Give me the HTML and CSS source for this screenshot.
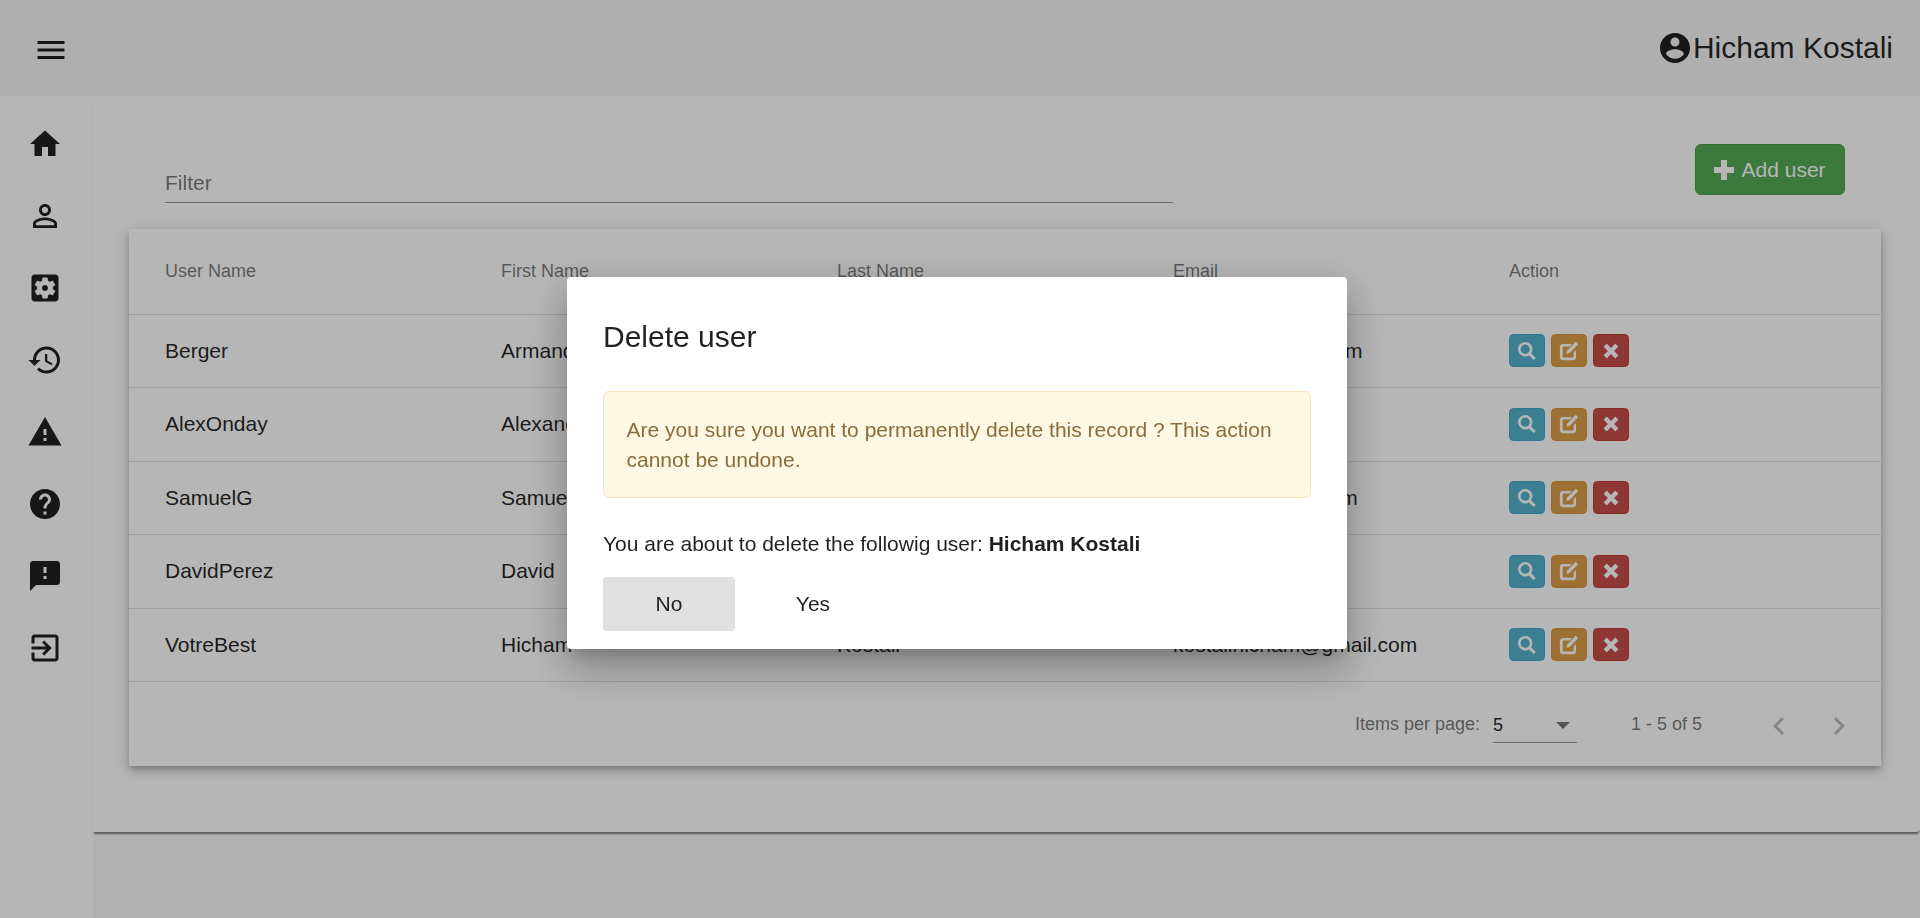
FILE: index.html
```html
<!DOCTYPE html>
<html lang="en">
<head>
  <meta charset="UTF-8" />
  <title>Users</title>
  <link rel="stylesheet" href="styles.css">
</head>
<body>

<svg class="icon-defs">
  <symbol id="i-menu" viewBox="0 0 24 24"><path d="M3 18h18v-2H3v2zm0-5h18v-2H3v2zm0-7v2h18V6H3z"/></symbol>
  <symbol id="i-account" viewBox="0 0 24 24"><path d="M12 2C6.48 2 2 6.48 2 12s4.48 10 10 10 10-4.48 10-10S17.52 2 12 2zm0 3c1.66 0 3 1.34 3 3s-1.34 3-3 3-3-1.34-3-3 1.34-3 3-3zm0 14.2c-2.5 0-4.71-1.28-6-3.22.03-1.99 4-3.08 6-3.08 1.99 0 5.97 1.09 6 3.08-1.29 1.94-3.5 3.22-6 3.22z"/></symbol>
  <symbol id="i-home" viewBox="0 0 24 24"><path d="M10 20v-6h4v6h5v-8h3L12 3 2 12h3v8z"/></symbol>
  <symbol id="i-person" viewBox="0 0 24 24"><path d="M12 5.9c1.16 0 2.1.94 2.1 2.1s-.94 2.1-2.1 2.1S9.9 9.16 9.9 8s.94-2.1 2.1-2.1m0 9c2.97 0 6.1 1.46 6.1 2.1v1.1H5.9V17c0-.64 3.13-2.1 6.1-2.1M12 4C9.79 4 8 5.79 8 8s1.79 4 4 4 4-1.79 4-4-1.79-4-4-4zm0 9c-2.67 0-8 1.34-8 4v3h16v-3c0-2.66-5.33-4-8-4z"/></symbol>
  <symbol id="i-settings" viewBox="0 0 24 24"><path d="M12 10c-1.1 0-2 .9-2 2s.9 2 2 2 2-.9 2-2-.9-2-2-2zm7-7H5c-1.11 0-2 .9-2 2v14c0 1.1.89 2 2 2h14c1.11 0 2-.9 2-2V5c0-1.1-.89-2-2-2zm-1.75 9c0 .23-.02.46-.05.68l1.48 1.16c.13.11.17.3.08.45l-1.4 2.42c-.09.15-.27.21-.43.15l-1.74-.7c-.36.28-.76.51-1.18.69l-.26 1.85c-.03.17-.18.3-.35.3h-2.8c-.17 0-.32-.13-.35-.29l-.26-1.85c-.43-.18-.82-.41-1.18-.69l-1.74.7c-.16.06-.34 0-.43-.15l-1.4-2.42c-.09-.15-.05-.34.08-.45l1.48-1.16c-.03-.23-.05-.46-.05-.69 0-.23.02-.46.05-.68l-1.48-1.16c-.13-.11-.17-.3-.08-.45l1.4-2.42c.09-.15.27-.21.43-.15l1.74.7c.36-.28.76-.51 1.18-.69l.26-1.85c.03-.17.18-.3.35-.3h2.8c.17 0 .32.13.35.29l.26 1.85c.43.18.82.41 1.18.69l1.74-.7c.16-.06.34 0 .43.15l1.4 2.42c.09.15.05.34-.08.45l-1.48 1.16c.03.23.05.46.05.69z"/></symbol>
  <symbol id="i-history" viewBox="0 0 24 24"><path d="M13 3c-4.97 0-9 4.03-9 9H1l3.89 3.89.07.14L9 12H6c0-3.87 3.13-7 7-7s7 3.13 7 7-3.13 7-7 7c-1.93 0-3.68-.79-4.94-2.06l-1.42 1.42C8.27 19.99 10.51 21 13 21c4.97 0 9-4.03 9-9s-4.03-9-9-9zm-1 5v5l4.28 2.54.72-1.21-3.5-2.08V8H12z"/></symbol>
  <symbol id="i-warning" viewBox="0 0 24 24"><path d="M1 21h22L12 2 1 21zm12-3h-2v-2h2v2zm0-4h-2v-4h2v4z"/></symbol>
  <symbol id="i-help" viewBox="0 0 24 24"><path d="M12 2C6.48 2 2 6.48 2 12s4.48 10 10 10 10-4.48 10-10S17.52 2 12 2zm1 17h-2v-2h2v2zm2.07-7.75l-.9.92C13.45 12.9 13 13.5 13 15h-2v-.5c0-1.1.45-2.1 1.17-2.83l1.24-1.26c.37-.36.59-.86.59-1.41 0-1.1-.9-2-2-2s-2 .9-2 2H8c0-2.21 1.79-4 4-4s4 1.79 4 4c0 .88-.36 1.68-.93 2.25z"/></symbol>
  <symbol id="i-feedback" viewBox="0 0 24 24"><path d="M20 2H4c-1.1 0-1.99.9-1.99 2L2 22l4-4h14c1.1 0 2-.9 2-2V4c0-1.1-.9-2-2-2zm-7 12h-2v-2h2v2zm0-4h-2V6h2v4z"/></symbol>
  <symbol id="i-exit" viewBox="0 0 24 24"><path d="M10.09 15.59L11.5 17l5-5-5-5-1.41 1.41L12.67 11H3v2h9.67l-2.58 2.59zM19 3H5c-1.11 0-2 .9-2 2v4h2V5h14v14H5v-4H3v4c0 1.1.89 2 2 2h14c1.1 0 2-.9 2-2V5c0-1.1-.9-2-2-2z"/></symbol>
  <symbol id="i-prev" viewBox="0 0 24 24"><path d="M15.41 7.41L14 6l-6 6 6 6 1.41-1.41L10.83 12z"/></symbol>
  <symbol id="i-next" viewBox="0 0 24 24"><path d="M10 6L8.59 7.41 13.17 12l-4.58 4.58L10 18l6-6z"/></symbol>
  <symbol id="g-plus" viewBox="0 0 20 20"><path d="M7 0h6v7h7v6h-7v7H7v-7H0V7h7z"/></symbol>
  <symbol id="g-search" viewBox="0 0 20 20"><path fill-rule="evenodd" d="M8.2 1a7.2 7.2 0 0 1 5.9 11.3l4.7 4.7-2.2 2.1-4.7-4.7A7.2 7.2 0 1 1 8.2 1zm0 2.6a4.6 4.6 0 1 0 0 9.2 4.6 4.6 0 0 0 0-9.2z"/></symbol>
  <symbol id="g-edit" viewBox="0 0 20 20"><path d="M4 3h9l-2.4 2.4H4.6a1 1 0 0 0-1 1v9a1 1 0 0 0 1 1h9a1 1 0 0 0 1-1v-4l2.4-2.4V16a3.2 3.2 0 0 1-3.2 3.2H4A3.2 3.2 0 0 1 .9 16V6.2A3.2 3.2 0 0 1 4 3z"/><path d="M16.8.8l2.4 2.4-8.6 8.7-3.2.8.8-3.2z"/></symbol>
  <symbol id="g-remove" viewBox="0 0 20 20"><path d="M5.2 1.8L10 6.6l4.8-4.8 3.4 3.4L13.4 10l4.8 4.8-3.4 3.4-4.8-4.8-4.8 4.8-3.4-3.4L6.6 10 1.8 5.2z"/></symbol>
</svg>

<header class="topbar">
  <svg class="icon menu-icon"><use href="#i-menu"/></svg>
  <div class="account">
    <svg class="icon"><use href="#i-account"/></svg>
    <span>Hicham Kostali</span>
  </div>
</header>

<div class="layout">
  <nav class="sidebar">
    <svg class="icon"><use href="#i-home"/></svg>
    <svg class="icon"><use href="#i-person"/></svg>
    <svg class="icon"><use href="#i-settings"/></svg>
    <svg class="icon"><use href="#i-history"/></svg>
    <svg class="icon"><use href="#i-warning"/></svg>
    <svg class="icon"><use href="#i-help"/></svg>
    <svg class="icon"><use href="#i-feedback"/></svg>
    <svg class="icon"><use href="#i-exit"/></svg>
  </nav>

  <div class="content">
    <main class="panel">
      <div class="tools">
        <div class="filter">Filter</div>
        <button class="add-btn"><svg class="glyph"><use href="#g-plus"/></svg>Add user</button>
      </div>

      <div class="card">
        <div class="row head-row">
          <div class="cell">User Name</div>
          <div class="cell">First Name</div>
          <div class="cell">Last Name</div>
          <div class="cell">Email</div>
          <div class="cell">Action</div>
        </div>
        <div class="row">
          <div class="cell">Berger</div>
          <div class="cell">Armand</div>
          <div class="cell">Berger</div>
          <div class="cell">aberger@gmail.com</div>
          <div class="cell actions">
            <button class="act act-info"><svg class="glyph"><use href="#g-search"/></svg></button>
            <button class="act act-warn"><svg class="glyph"><use href="#g-edit"/></svg></button>
            <button class="act act-danger"><svg class="glyph"><use href="#g-remove"/></svg></button>
          </div>
        </div>
        <div class="row">
          <div class="cell">AlexOnday</div>
          <div class="cell">Alexandre</div>
          <div class="cell">Onday</div>
          <div class="cell">alex@onday.com</div>
          <div class="cell actions">
            <button class="act act-info"><svg class="glyph"><use href="#g-search"/></svg></button>
            <button class="act act-warn"><svg class="glyph"><use href="#g-edit"/></svg></button>
            <button class="act act-danger"><svg class="glyph"><use href="#g-remove"/></svg></button>
          </div>
        </div>
        <div class="row">
          <div class="cell">SamuelG</div>
          <div class="cell">Samuel</div>
          <div class="cell">Gauthier</div>
          <div class="cell">samuel@gmail.com</div>
          <div class="cell actions">
            <button class="act act-info"><svg class="glyph"><use href="#g-search"/></svg></button>
            <button class="act act-warn"><svg class="glyph"><use href="#g-edit"/></svg></button>
            <button class="act act-danger"><svg class="glyph"><use href="#g-remove"/></svg></button>
          </div>
        </div>
        <div class="row">
          <div class="cell">DavidPerez</div>
          <div class="cell">David</div>
          <div class="cell">Perez</div>
          <div class="cell">david@perez.com</div>
          <div class="cell actions">
            <button class="act act-info"><svg class="glyph"><use href="#g-search"/></svg></button>
            <button class="act act-warn"><svg class="glyph"><use href="#g-edit"/></svg></button>
            <button class="act act-danger"><svg class="glyph"><use href="#g-remove"/></svg></button>
          </div>
        </div>
        <div class="row">
          <div class="cell">VotreBest</div>
          <div class="cell">Hicham</div>
          <div class="cell">Kostali</div>
          <div class="cell">kostalihicham@gmail.com</div>
          <div class="cell actions">
            <button class="act act-info"><svg class="glyph"><use href="#g-search"/></svg></button>
            <button class="act act-warn"><svg class="glyph"><use href="#g-edit"/></svg></button>
            <button class="act act-danger"><svg class="glyph"><use href="#g-remove"/></svg></button>
          </div>
        </div>

        <div class="paginator">
          <span>Items per page:</span>
          <div class="page-select">
            <span class="page-value">5</span>
            <span class="page-arrow"></span>
          </div>
          <span class="page-range">1 - 5 of 5</span>
          <svg class="icon page-btn"><use href="#i-prev"/></svg>
          <svg class="icon page-btn"><use href="#i-next"/></svg>
        </div>
      </div>
    </main>
  </div>
</div>

<!-- Modal -->
<div class="backdrop">
  <div class="modal">
    <h2 class="modal-title">Delete user</h2>
    <div class="alert">Are you sure you want to permanently delete this record ? This action cannot be undone.</div>
    <p class="modal-text">You are about to delete the followig user: <strong>Hicham Kostali</strong></p>
    <div class="modal-actions">
      <button class="modal-btn modal-btn-no">No</button>
      <button class="modal-btn">Yes</button>
    </div>
  </div>
</div>

</body>
</html>
```

FILE: styles.css
```css
html, body {
  height: 100%;
}

body {
  margin: 0;
  overflow: hidden;
  font-family: "Liberation Sans", Arial, sans-serif;
  font-size: 21px;
  line-height: 30px;
  background: #f9f9f9;
  color: rgba(0,0,0,0.87);
}

button {
  font-family: inherit;
}

.icon-defs {
  display: none;
}

.icon {
  width: 36px;
  height: 36px;
  fill: currentColor;
  flex: none;
}

.glyph {
  width: 20px;
  height: 20px;
  fill: currentColor;
  flex: none;
}

/* Top bar */
.topbar {
  height: 96px;
  box-sizing: border-box;
  background: #f5f5f5;
  display: flex;
  align-items: center;
  justify-content: space-between;
  padding: 0 27px 0 33px;
}

.menu-icon {
  margin-top: 4px;
}

.account {
  display: flex;
  align-items: center;
  font-size: 30px;
}

/* Sidebar */
.layout {
  display: flex;
  height: calc(100% - 96px);
}

.sidebar {
  width: 93px;
  box-sizing: border-box;
  padding: 30px 3px 0 0;
  background: #fff;
  display: flex;
  flex-direction: column;
  align-items: center;
  gap: 36px;
}

.content {
  flex: 1;
  min-width: 0;
}

.panel {
  height: 736px;
  box-sizing: border-box;
  background: #fff;
  border-bottom-right-radius: 4px;
  padding: 0 39px 0 36px;
  box-shadow: 0 3px 2px -1px rgba(0,0,0,0.5);
}

/* Filter row */
.tools {
  height: 133px;
  box-sizing: border-box;
  padding: 48px 36px 0 36px;
  display: flex;
  justify-content: space-between;
  align-items: flex-start;
}

.filter {
  width: 1008px;
  box-sizing: border-box;
  margin-top: 24px;
  height: 34.5px;
  border-bottom: 1.5px solid rgba(0,0,0,0.42);
  color: rgba(0,0,0,0.54);
}

.add-btn {
  height: 51px;
  width: 150px;
  box-sizing: border-box;
  display: flex;
  align-items: center;
  gap: 7.5px;
  padding: 0 0 0 18px;
  font-size: 21px;
  color: #fff;
  background: #55aa55;
  border: 1.5px solid #46a046;
  border-radius: 6px;
}

/* Table */
.card {
  background: #fff;
  box-shadow: 0 3px 5px -1px rgba(0,0,0,0.2), 0 6px 10px 0 rgba(0,0,0,0.14), 0 1px 18px 0 rgba(0,0,0,0.12);
}

.row {
  height: 73.5px;
  box-sizing: border-box;
  border-bottom: 1.5px solid rgba(0,0,0,0.12);
  display: flex;
  align-items: center;
  padding-left: 36px;
}

.head-row {
  height: 85.5px;
  font-size: 18px;
  color: rgba(0,0,0,0.54);
}

.cell {
  width: 336px;
  flex: none;
}

.actions {
  display: flex;
  gap: 6px;
}

.act {
  width: 36px;
  height: 33px;
  padding: 0;
  color: #fff;
  border: 1.5px solid;
  border-radius: 4.5px;
  display: flex;
  align-items: center;
  justify-content: center;
}

.act-info { background: #54b1cd; border-color: #41aac9; }
.act-warn { background: #dd9f48; border-color: #db9532; }
.act-danger { background: #c84d49; border-color: #c33a35; }

.act-danger .glyph {
  width: 18px;
  height: 18px;
}

.paginator {
  height: 84px;
  box-sizing: border-box;
  padding-right: 12px;
  display: flex;
  align-items: center;
  justify-content: flex-end;
  font-size: 18px;
  color: rgba(0,0,0,0.54);
}

.page-select {
  width: 84px;
  height: 34.5px;
  margin: 2px 54px 0 13px;
  border-bottom: 1.5px solid rgba(0,0,0,0.42);
  display: flex;
  justify-content: space-between;
  align-items: flex-start;
  color: rgba(0,0,0,0.87);
}

.page-value {
  line-height: 37px;
}

.page-arrow {
  width: 0;
  height: 0;
  margin: 15px 7px 0 0;
  border-left: 7.5px solid transparent;
  border-right: 7.5px solid transparent;
  border-top: 7.5px solid rgba(0,0,0,0.54);
}

.page-range {
  margin-right: 47px;
}

.page-btn {
  color: rgba(0,0,0,0.26);
  margin-left: 12px;
  margin-right: 12px;
  position: relative;
  top: 2px;
}

/* Modal */
.backdrop {
  position: fixed;
  left: 0; top: 0;
  width: 100%; height: 100%;
  box-sizing: border-box;
  padding: 8px 6px 0 0;
  background: rgba(0,0,0,0.288);
  display: flex;
  justify-content: center;
  align-items: center;
}

.modal {
  width: 780px;
  height: 372px;
  box-sizing: border-box;
  padding: 36px;
  background: #fff;
  border-radius: 4px;
  box-shadow: 0 11px 15px -7px rgba(0,0,0,0.2), 0 24px 38px 3px rgba(0,0,0,0.14), 0 9px 46px 8px rgba(0,0,0,0.12);
}

.modal-title {
  margin: 0 0 30px;
  font-size: 30px;
  font-weight: 400;
  line-height: 48px;
}

.alert {
  padding: 22.5px;
  background: #fcf8e3;
  border: 1.5px solid #f8e4bd;
  border-radius: 6px;
  color: #8a6d3b;
}

.modal-text {
  margin: 30.5px 0 0;
}

.modal-actions {
  margin-top: 18.5px;
  display: flex;
  gap: 12px;
}

.modal-btn {
  width: 132px;
  height: 54px;
  font-size: 21px;
  background: transparent;
  border: none;
  border-radius: 3px;
  color: rgba(0,0,0,0.87);
}

.modal-btn-no {
  background: #e0e0e0;
}
```
